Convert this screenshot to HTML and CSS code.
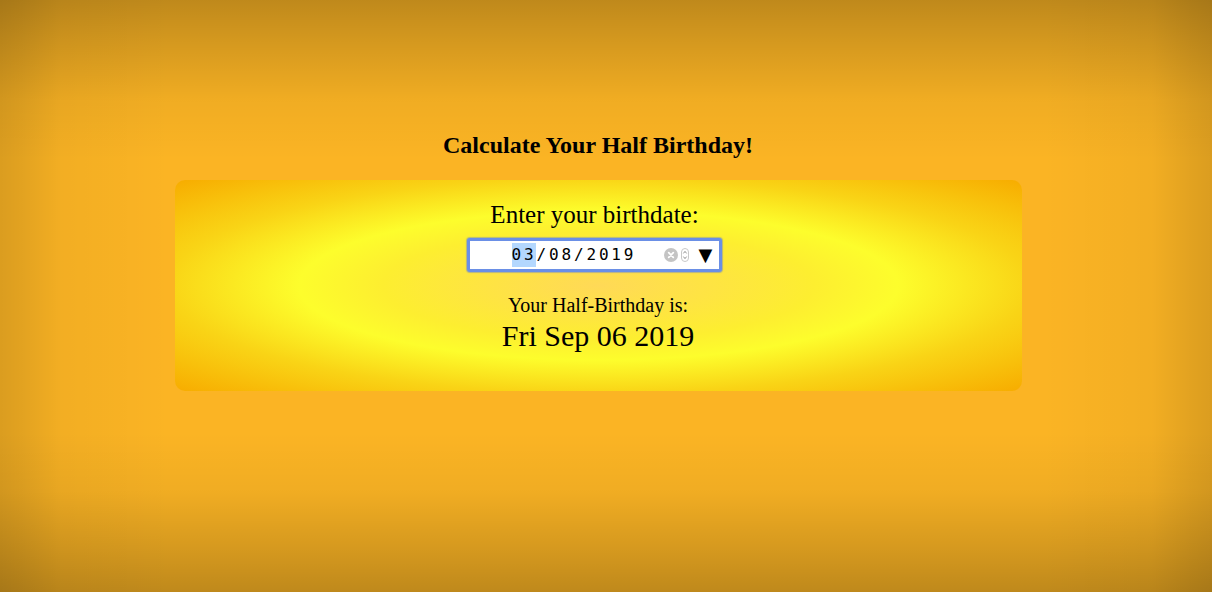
FILE: index.html
```html
<!DOCTYPE html>
<html lang="en">
<head>
<meta charset="utf-8">
<title>Half Birthday</title>
<link rel="stylesheet" href="styles.css">
</head>
<body>
<main class="page">
  <h3 class="title">Calculate Your Half Birthday!</h3>
  <section class="card">
    <label class="prompt" for="bday">Enter your birthdate:</label>
    <div class="date-input" id="bday">
      <span class="date-text"><span class="seg-sel">03</span>/08/2019</span>
      <span class="clear"><svg width="14" height="14" viewBox="0 0 14 14"><circle cx="7" cy="7" r="7" fill="#c4c4c4"/><path d="M4.7 4.7 L9.3 9.3 M9.3 4.7 L4.7 9.3" stroke="#fff" stroke-width="1.7" stroke-linecap="round"/></svg></span>
      <span class="spin"><svg width="8" height="14" viewBox="0 0 8 14"><rect x="0.5" y="0.5" width="7" height="13" rx="3.5" fill="#fff" stroke="#c8c8c8"/><path d="M2.4 5.4 L4 3.4 L5.6 5.4 M2.4 8.6 L4 10.6 L5.6 8.6" fill="none" stroke="#777" stroke-width="0.8"/></svg></span>
      <span class="drop">▼</span>
    </div>
    <p class="result-label">Your Half-Birthday is:</p>
    <p class="result">Fri Sep 06 2019</p>
  </section>
</main>
</body>
</html>
```
FILE: styles.css
```css
html, body {
  margin: 0;
  height: 100%;
}
body {
  font-family: "Liberation Serif", "Times New Roman", serif;
  color: #000;
  background:
    linear-gradient(to bottom,
      rgba(0, 0, 0, 0.24) 0,
      rgba(0, 0, 0, 0.155) 40px,
      rgba(0, 0, 0, 0.045) 100px,
      rgba(0, 0, 0, 0) 160px,
      rgba(0, 0, 0, 0) calc(100% - 160px),
      rgba(0, 0, 0, 0.045) calc(100% - 100px),
      rgba(0, 0, 0, 0.155) calc(100% - 40px),
      rgba(0, 0, 0, 0.24) 100%),
    linear-gradient(to right,
      rgba(0, 0, 0, 0.13) 0,
      rgba(0, 0, 0, 0.1) 20px,
      rgba(0, 0, 0, 0.035) 60px,
      rgba(0, 0, 0, 0) 170px,
      rgba(0, 0, 0, 0) calc(100% - 170px),
      rgba(0, 0, 0, 0.035) calc(100% - 60px),
      rgba(0, 0, 0, 0.1) calc(100% - 20px),
      rgba(0, 0, 0, 0.13) 100%),
    #fbb424;
}
.page {
  height: 100%;
  display: flex;
  flex-direction: column;
  align-items: center;
  padding: 130px 16px 0 0;
  box-sizing: border-box;
}
.title {
  margin: 0;
  font-size: 24px;
  line-height: 31px;
  font-weight: bold;
}
.card {
  margin-top: 19px;
  width: 847px;
  height: 211px;
  box-sizing: border-box;
  border-radius: 10px;
  background: radial-gradient(ellipse farthest-corner at center, #ffd957 0%, #fdee30 36%, #fdfd2c 50%, #f9d416 72%, #f7ac00 100%);
  display: flex;
  flex-direction: column;
  align-items: center;
  padding-top: 20px;
}
.prompt {
  font-size: 25px;
  line-height: 29px;
  padding-right: 7px;
}
.date-input {
  margin: 9px 8px 0 0;
  width: 255px;
  height: 34px;
  box-sizing: border-box;
  background: #fff;
  border: 3px solid #6a8fe6;
  border-radius: 3px;
  box-shadow: 0 0 1px 1px rgba(90, 120, 220, 0.45);
  display: flex;
  align-items: center;
  padding-left: 42px;
}
.date-text {
  font-family: "DejaVu Sans Mono", "Liberation Mono", monospace;
  font-size: 16px;
  letter-spacing: 2.85px;
  line-height: 24px;
  width: 150px;
}
.seg-sel {
  background: #b3d7fe;
  display: inline-block;
}
.clear {
  display: flex;
  margin-left: 2px;
}
.spin {
  display: flex;
  margin-left: 3px;
}
.drop {
  margin-left: 10px;
  font-family: "DejaVu Sans", sans-serif;
  font-size: 18px;
  line-height: 18px;
}
.result-label {
  margin: 22px 0 0;
  font-size: 20px;
  line-height: 23px;
}
.result {
  margin: 1px 0 0;
  font-size: 30px;
  line-height: 35px;
}
```
